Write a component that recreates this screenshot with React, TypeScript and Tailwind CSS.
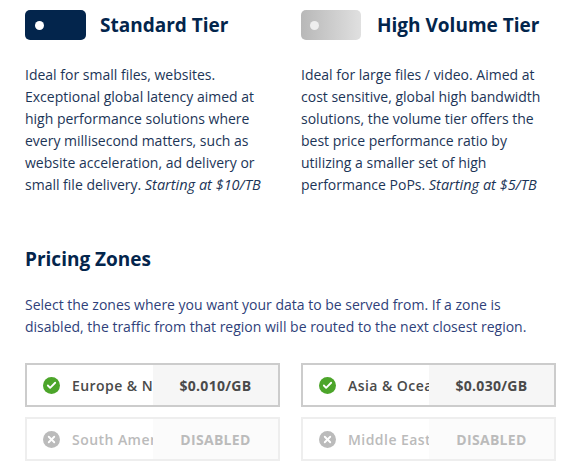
import React from 'react';
import { Check, X } from 'lucide-react';

const font = "font-['Open_Sans',sans-serif]";

type Zone = { name: string; price: string; enabled: boolean };

const zones: Zone[] = [
  { name: 'Europe & North America', price: '$0.010/GB', enabled: true },
  { name: 'Asia & Oceania', price: '$0.030/GB', enabled: true },
  { name: 'South America', price: 'DISABLED', enabled: false },
  { name: 'Middle East', price: 'DISABLED', enabled: false },
];

const ZoneBox = ({ zone }: { zone: Zone }) => (
  <div
    className={`flex h-[44px] items-stretch border-2 ${zone.enabled ? 'border-[#cccccc]' : 'border-[#eeeeee]'}`}
  >
    <div className="flex w-[126px] shrink-0 items-center overflow-hidden pl-[16px]">
      <span
        className={`flex h-[17px] w-[17px] shrink-0 items-center justify-center rounded-full ${zone.enabled ? 'bg-[#4ca52a]' : 'bg-[#bbbbbb]'}`}
      >
        {zone.enabled ? (
          <Check className="h-[11px] w-[11px] text-white" strokeWidth={4} />
        ) : (
          <X className="h-[11px] w-[11px] text-white" strokeWidth={4} />
        )}
      </span>
      <span
        className={`ml-[12px] whitespace-nowrap text-[14px] font-semibold tracking-[0.45px] ${zone.enabled ? 'text-[#4a4a4a]' : 'text-[#bbbbbb]'}`}
      >
        {zone.name}
      </span>
    </div>
    <div
      className={`flex flex-1 items-center justify-center text-[14px] font-bold tracking-[0.3px] ${zone.enabled ? 'bg-[#f6f6f6] text-[#4a4a4a]' : 'bg-[#fbfbfb] text-[#bbbbbb]'}`}
    >
      {zone.price}
    </div>
  </div>
);

const Tier = ({
  title,
  swatch,
  dot,
  gap,
  children,
}: {
  title: string;
  swatch: string;
  dot: string;
  gap: string;
  children: React.ReactNode;
}) => (
  <div>
    <div className={`flex h-[30px] items-center ${gap}`}>
      <div className={`flex h-[30px] items-center rounded-[5px] ${swatch}`}>
        <span className={`h-[9px] w-[9px] rounded-full ${dot}`} />
      </div>
      <h2 className="text-[19px] font-bold text-[#03254c]">{title}</h2>
    </div>
    <p className="mt-[24px] text-[14px] leading-[22px] text-[#1c3557]">{children}</p>
  </div>
);

export default function App() {
  return (
    <div className={`${font} h-[474px] w-[582px] overflow-hidden bg-white pl-[25px] pr-[26px] pt-[10px]`}>
      <div className="grid grid-cols-2 gap-x-[21px]">
        <Tier title="Standard Tier" swatch="w-[61px] pl-[10px] bg-[#03254c]" dot="bg-white" gap="gap-[14px]">
          Ideal for small files, websites. Exceptional global latency aimed at high performance solutions where every millisecond matters, such as website acceleration, ad delivery or small file delivery.{' '}
          <em className="text-[14.5px]">Starting at $10/TB</em>
        </Tier>
        <Tier
          title="High Volume Tier"
          swatch="w-[60px] pl-[9px] bg-gradient-to-r from-[#b8b8b8] to-[#e0e0e0]"
          dot="bg-[#eeeeee]"
          gap="gap-[16px]"
        >
          Ideal for large files / video. Aimed at cost sensitive, global high bandwidth solutions, the volume tier offers the best price performance ratio by utilizing a smaller set of high performance PoPs.{' '}
          <em className="text-[14.5px]">Starting at $5/TB</em>
        </Tier>
      </div>
      <h2 className="mt-[48px] text-[19px] font-bold leading-[30px] text-[#03254c]">Pricing Zones</h2>
      <p className="mt-[20px] text-[14px] leading-[22px] text-[#2f3f7a]">
        Select the zones where you want your data to be served from. If a zone is disabled, the traffic from that region will be routed to the next closest region.
      </p>
      <div className="mt-[25px] grid grid-cols-2 gap-x-[21px] gap-y-[10px]">
        {zones.map((zone) => (
          <ZoneBox key={zone.name} zone={zone} />
        ))}
      </div>
    </div>
  );
}
